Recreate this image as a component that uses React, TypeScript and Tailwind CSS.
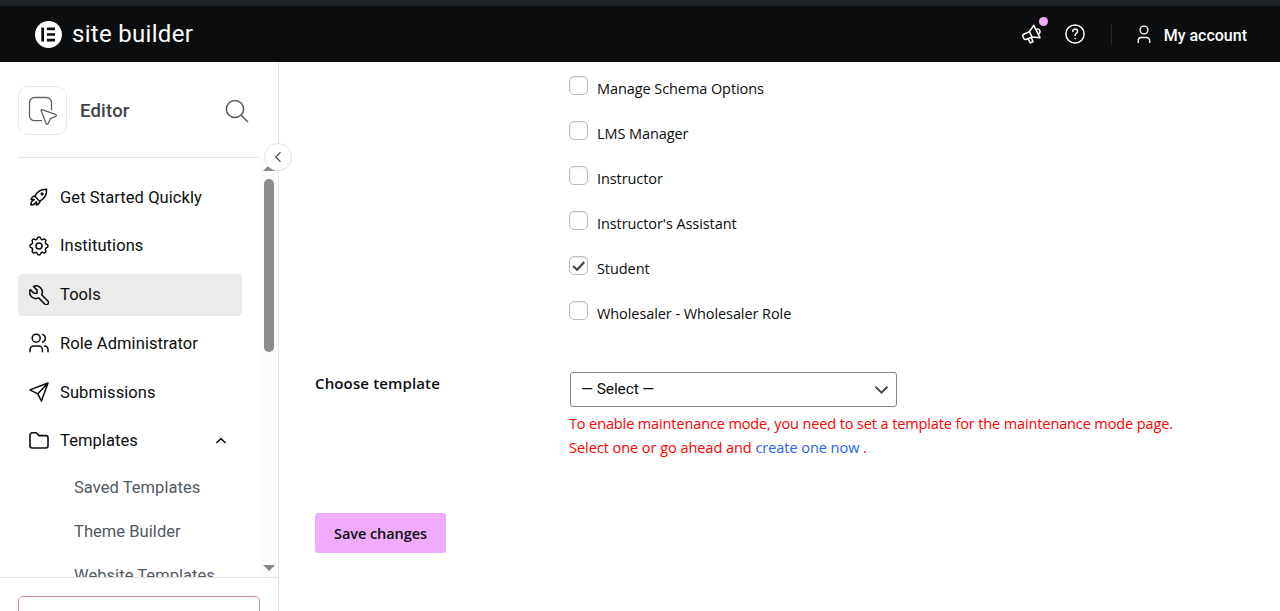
import { useState } from "react";

const roles = [
  "Manage Schema Options",
  "LMS Manager",
  "Instructor",
  "Instructor's Assistant",
  "Student",
  "Wholesaler - Wholesaler Role",
];

const navItems = [
  { label: "Get Started Quickly", icon: <RocketIcon /> },
  { label: "Institutions", icon: <GearIcon /> },
  { label: "Tools", icon: <WrenchIcon />, active: true },
  { label: "Role Administrator", icon: <UsersIcon /> },
  { label: "Submissions", icon: <SendIcon /> },
  { label: "Templates", icon: <FolderIcon />, open: true },
];

const subItems = ["Saved Templates", "Theme Builder", "Website Templates"];

function RocketIcon() {
  return (
    <svg className="h-5 w-5" viewBox="0 0 20 20" fill="none" stroke="currentColor" strokeWidth="1.5" strokeLinejoin="round" strokeLinecap="round">
      <path d="M6 9.6C7.6 5 11.6 2.2 17.6 2.3C17.8 8.2 15 12.4 10.4 14.1Z" />
      <path d="M6.3 8.9C4 9 2.6 10.5 2 12.6C3.3 12.3 4.3 12.3 5.2 12.7M11.2 13.8C11 15.9 9.6 17.4 7.4 18C7.8 16.7 7.7 15.7 7.4 14.8" />
      <path d="M4.2 13.4C2.4 14.1 1.9 15.6 1.9 18.1C4.4 18.1 5.9 17.6 6.6 15.8" />
      <circle cx="13.1" cy="6.9" r="0.9" />
    </svg>
  );
}

function GearIcon() {
  return (
    <svg className="h-5 w-5" viewBox="2 2 20 20" fill="none" stroke="currentColor" strokeWidth="1.5" strokeLinejoin="round" strokeLinecap="round">
      <path d="M10.325 4.317c.426 -1.756 2.924 -1.756 3.35 0a1.724 1.724 0 0 0 2.573 1.066c1.543 -.94 3.31 .826 2.37 2.37a1.724 1.724 0 0 0 1.065 2.572c1.756 .426 1.756 2.924 0 3.35a1.724 1.724 0 0 0 -1.066 2.573c.94 1.543 -.826 3.31 -2.37 2.37a1.724 1.724 0 0 0 -2.572 1.065c-.426 1.756 -2.924 1.756 -3.35 0a1.724 1.724 0 0 0 -2.573 -1.066c-1.543 .94 -3.31 -.826 -2.37 -2.37a1.724 1.724 0 0 0 -1.065 -2.572c-1.756 -.426 -1.756 -2.924 0 -3.35a1.724 1.724 0 0 0 1.066 -2.573c-.94 -1.543 .826 -3.31 2.37 -2.37c1 .608 2.296 .07 2.572 -1.065z" />
      <circle cx="12" cy="12" r="3" />
    </svg>
  );
}

function WrenchIcon() {
  return (
    <svg className="h-5 w-5" viewBox="2.2 2 19.4 19.4" fill="none" stroke="currentColor" strokeWidth="1.5" strokeLinejoin="round" strokeLinecap="round">
      <path d="M7 10h3v-3l-3.5 -3.5a6 6 0 0 1 8 8l6 6a2 2 0 0 1 -3 3l-6 -6a6 6 0 0 1 -8 -8l3.5 3.5" />
    </svg>
  );
}

function UsersIcon() {
  return (
    <svg className="h-5 w-5" viewBox="0 0 20 20" fill="none" stroke="currentColor" strokeWidth="1.5" strokeLinecap="round">
      <circle cx="7.2" cy="5.2" r="4" />
      <path d="M1 18.8V16.6A3.7 3.7 0 0 1 4.7 12.9H9.7A3.7 3.7 0 0 1 13.4 16.6V18.8M13.6 1.4A4 4 0 0 1 13.6 9M15.4 13A3.7 3.7 0 0 1 19 16.6V18.8" />
    </svg>
  );
}

function SendIcon() {
  return (
    <svg className="h-5 w-5" viewBox="0 0 20 20" fill="none" stroke="currentColor" strokeWidth="1.5" strokeLinejoin="round" strokeLinecap="round">
      <path d="M19 1L8.8 11.8M19 1L12.4 19L8.8 11.8L0.9 7.9Z" />
    </svg>
  );
}

function FolderIcon() {
  return (
    <svg className="h-5 w-5" viewBox="0 0 20 20" fill="none" stroke="currentColor" strokeWidth="1.6" strokeLinejoin="round">
      <path d="M3.2 1.8H7.2L10 4.6H16.8A2.2 2.2 0 0 1 19 6.8V14.8A2.2 2.2 0 0 1 16.8 17H3.2A2.2 2.2 0 0 1 1 14.8V4A2.2 2.2 0 0 1 3.2 1.8Z" />
    </svg>
  );
}

function Header() {
  return (
    <header className="shrink-0 border-t-6 border-[#1d2327] bg-[#0c0d0e] text-white">
      <div className="flex h-14 items-center pr-[33px] pl-[35px]">
        <svg className="h-[27px] w-[27px]" viewBox="0 0 27 27">
          <circle cx="13.5" cy="13.5" r="13.5" fill="#fff" />
          <path d="M6.3 6.6H9V20.4H6.3ZM11.9 6.6H20V9.3H11.9ZM11.9 12.2H20V14.8H11.9ZM11.9 17.7H20V20.4H11.9Z" fill="#0c0d0e" />
        </svg>
        <span className="ml-2.5 text-[24px] leading-none tracking-[0.3px]">site builder</span>

        <div className="ml-auto flex items-center">
          <div className="relative">
            <svg className="h-5 w-5" viewBox="0 0 20 20" fill="none" stroke="#fff" strokeWidth="1.5" strokeLinejoin="round" strokeLinecap="round">
              <path d="M1.3 10.5L7.4 7.6L11.8 1.3L18 13.7L10 13.1L3.7 15.5Q2.6 15.8 2 14.6L0.9 12.2Q0.5 11 1.3 10.5Z" />
              <path d="M7.4 7.6L10 13.1M6.2 14.8L8.3 18.9L11 17.8L9.3 13.6M15.2 5.1A2.6 2.6 0 0 1 17.3 9.5" />
            </svg>
            <span className="absolute -top-[7px] left-[17px] h-[9px] w-[9px] rounded-full bg-[#f0abfc]" />
          </div>
          <svg className="ml-[23px] h-5 w-5" viewBox="0 0 20 20" fill="none" stroke="#fff" strokeWidth="1.5" strokeLinecap="round">
            <circle cx="10" cy="10" r="9.1" />
            <path d="M7.8 7.4C7.8 4.1 12.5 4.3 12.5 7.3C12.5 9.3 10.1 9.2 10.1 11.4M10.1 14.5V14.6" />
          </svg>
          <span className="ml-[26px] h-[21px] w-px bg-[#26282b]" />
          <svg className="mt-px ml-[25px] h-[19px] w-[14px]" viewBox="0 0 14 19" fill="none" stroke="#fff" strokeWidth="1.4">
            <circle cx="7" cy="5" r="3.9" />
            <path d="M1.3 18V15.5A3 3 0 0 1 4.3 12.5H9.7A3 3 0 0 1 12.7 15.5V18" />
          </svg>
          <span className="ml-[13px] pt-[3px] text-[16px] leading-none font-medium">My account</span>
        </div>
      </div>
    </header>
  );
}

function Sidebar() {
  return (
    <aside className="relative flex w-[279px] shrink-0 flex-col border-r border-[#e3e4e6]">
      <div className="mr-[18px] ml-[18px] flex h-24 shrink-0 items-center border-b border-[#e3e4e6] pt-0.5 pr-[11.5px]">
        <div className="flex h-[49px] w-[49px] items-center justify-center rounded-[10px] border border-[#e6e8ea]">
          <svg className="h-[30px] w-[30px]" viewBox="0 0 30 30" fill="none" stroke="#5f646a" strokeWidth="1.3" strokeLinejoin="round">
            <path d="M14 24.7H6.5A5 5 0 0 1 1.5 19.7V6.5A5 5 0 0 1 6.5 1.5H18.5A5 5 0 0 1 23.5 6.5V14.5" />
            <path d="M14 13.6L27.5 18.4Q29.3 19.4 27.5 20.4L22.7 22.3L20 27.6Q19 29.2 18.1 27.6L13.1 14.5Q12.9 13.3 14 13.6Z" />
          </svg>
        </div>
        <h2 className="ml-[13px] pt-0.5 text-[18.5px] leading-none font-medium tracking-[0.2px] text-[#3f444b]">Editor</h2>
        <svg className="ml-auto h-6 w-6" viewBox="0 0 24 24" fill="none" stroke="#515962" strokeWidth="1.5">
          <circle cx="10" cy="10" r="8.6" />
          <path d="M16 16L23 23" />
        </svg>
      </div>

      <div className="flex h-[419px] shrink-0">
        <nav className="w-[261px] overflow-hidden pt-[18px] pr-[19px] pl-[18px]">
          <ul className="flex flex-col gap-[6.75px]">
            {navItems.map((item) => (
              <li key={item.label} className={`flex h-[42px] items-center rounded pr-3.5 pl-[11px] text-[#0c0d0e] ${item.active ? "bg-[#ebebeb]" : ""}`}>
                {item.icon}
                <span className="ml-[11px] pt-0.5 text-[16.5px] tracking-[0.08px]">{item.label}</span>
                {item.open && (
                  <svg className="ml-auto h-3 w-3.5" viewBox="0 0 14 12" fill="none" stroke="currentColor" strokeWidth="1.5">
                    <path d="M2.4 8L7 3.6L11.6 8" />
                  </svg>
                )}
              </li>
            ))}
          </ul>
          <ul className="pt-1 pl-14">
            {subItems.map((label) => (
              <li key={label} className="flex h-11 items-center pt-0.5 text-[16.5px] tracking-[0.05px] whitespace-nowrap text-[#515962]">
                {label}
              </li>
            ))}
          </ul>
        </nav>

        {/* scrollbar */}
        <div className="flex w-4 flex-col items-center bg-[#fbfbfb] pt-[7px] pb-1.5">
          <svg className="h-[6px] w-3" viewBox="0 0 12 6">
            <path d="M0 6L6 0L12 6Z" fill="#868686" />
          </svg>
          <div className="mt-2 h-[173px] w-[10px] rounded-full bg-[#8b8b8b]" />
          <svg className="mt-auto h-[6px] w-3" viewBox="0 0 12 6">
            <path d="M0 0L6 6L12 0Z" fill="#868686" />
          </svg>
        </div>
      </div>

      <div className="h-[34px] overflow-hidden border-t border-[#e3e4e6] px-[18px] pt-[18px]">
        <div className="h-10 rounded-[5px] border border-[#d58aaa]" />
      </div>

      <button className="absolute top-[81px] -right-[14px] flex h-7 w-7 items-center justify-center rounded-full border border-[#dfe1e3] bg-white">
        <svg className="h-3.5 w-3.5" viewBox="0 0 14 14" fill="none" stroke="#515962" strokeWidth="1.3">
          <path d="M9.5 2.2L4.7 7L9.5 11.8" />
        </svg>
      </button>
    </aside>
  );
}

export default function App() {
  const [selected, setSelected] = useState<string[]>(["Student"]);

  const toggle = (role: string) => {
    setSelected(selected.includes(role) ? selected.filter((r) => r !== role) : [...selected, role]);
  };

  return (
    <div className="flex h-[611px] w-full flex-col overflow-hidden bg-white font-[Roboto,sans-serif]">
      <Header />
      <div className="flex min-h-0 flex-1">
        <Sidebar />
        <main className="flex-1 pt-[14px] pl-[36px] font-['Open_Sans',sans-serif] text-[14.5px] tracking-[-0.12px] text-[#0c0d0e]">
          <div className="flex flex-col pl-[254px]">
            {roles.map((role) => (
              <label key={role} className="flex h-[45px] items-start">
                <input type="checkbox" className="peer sr-only" checked={selected.includes(role)} onChange={() => toggle(role)} />
                <span className="flex h-[19px] w-[19px] items-center justify-center rounded-[5px] border border-[#babcbf] shadow-[inset_0_1px_2px_rgba(0,0,0,0.08)]">
                  {selected.includes(role) && (
                    <svg className="h-[15px] w-[15px]" viewBox="0 0 15 15" fill="none" stroke="#3f444b" strokeWidth="2.2">
                      <path d="M2.1 8L6.1 11.7L13.3 3.9" />
                    </svg>
                  )}
                </span>
                <span className="ml-[9px] pt-[3px] leading-[20px] tracking-[-0.08px]">{role}</span>
              </label>
            ))}
          </div>

          <div className="flex pt-[26px]">
            <h3 className="w-[254px] text-[15px] leading-[22px] font-semibold tracking-[0.14px]">Choose template</h3>
            <div>
              <div className="ml-px flex h-[35px] w-[327px] items-center justify-between rounded-[3px] border border-[#7e858c] pr-2 pl-2.5 font-[Roboto,sans-serif] text-[15.5px]">
                <span>— Select —</span>
                <svg className="h-3.5 w-3.5" viewBox="0 0 14 14" fill="none" stroke="#4a4d50" strokeWidth="2">
                  <path d="M1.5 3.8L7.5 9.6L13.5 3.8" />
                </svg>
              </div>
              <p className="pt-[5px] leading-6 whitespace-nowrap text-[#ff0000]">
                To enable maintenance mode, you need to set a template for the maintenance mode page.
                <br />
                <span className="tracking-[-0.04px]">
                  Select one or go ahead and <a className="text-[#2563eb]">create one now</a> .
                </span>
              </p>
            </div>
          </div>

          <button className="mt-[53px] h-10 w-[131px] rounded-[3px] bg-[#f0abfc] pt-px font-semibold tracking-[-0.08px]">Save changes</button>
        </main>
      </div>
    </div>
  );
}
